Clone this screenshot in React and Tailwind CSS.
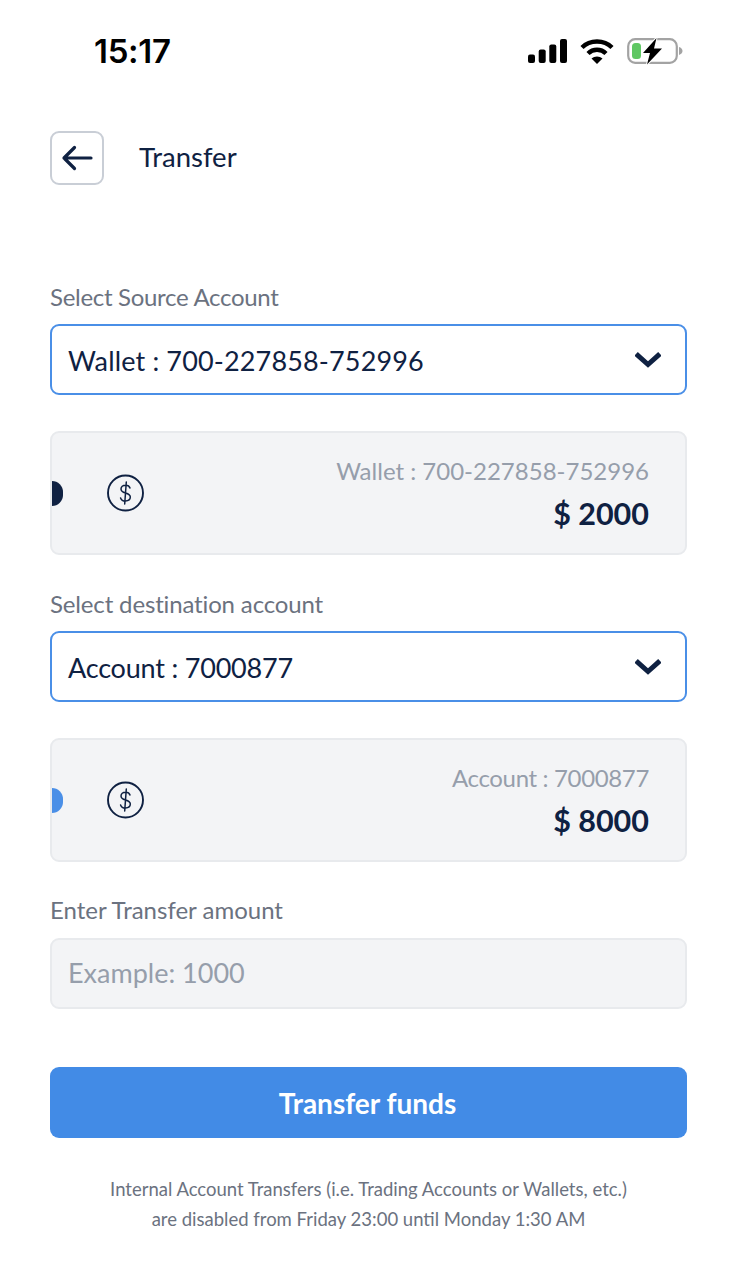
import React from "react";

function Chevron() {
  return (
    <svg width="26" height="18" viewBox="0 0 26 18" fill="none" className="shrink-0">
      <path d="M3 4.500 L13 13.500 L23 4.500" stroke="#0f2142" strokeWidth="5" strokeLinecap="square" strokeLinejoin="miter" />
    </svg>
  );
}

function Dollar() {
  return (
    <svg width="37" height="38" viewBox="0 0 37 38" fill="none" className="shrink-0">
      <circle cx="18.500" cy="19" r="17.500" stroke="#0f2142" strokeWidth="1.900" />
      <path d="M23 14c-.5-1.700-2.100-2.800-4.500-2.800-2.700 0-4.500 1.500-4.500 3.800 0 2.500 2 3.300 4.500 3.900 2.700.7 4.800 1.500 4.800 4.200 0 2.400-2.100 3.900-4.800 3.900-2.600 0-4.300-1.200-4.900-3.100M19.300 8l-1.600 22" stroke="#0f2142" strokeWidth="1.500" strokeLinecap="round" />
    </svg>
  );
}

function Select({ children, tracking }) {
  return (
    <div className="mt-[12px] h-[71px] rounded-[9px] border-2 border-[#4a8fe7] bg-white flex items-center justify-between pl-[16px] pr-[24px]">
      <span className={`pt-[3px] text-[27px] text-[#0f2142] ${tracking}`}>{children}</span>
      <Chevron />
    </div>
  );
}

function Card({ dot, name, amount, tracking }) {
  return (
    <div className="mt-[36px] h-[124px] rounded-[9px] border-2 border-[#e8eaed] bg-[#f3f4f6] flex items-center pr-[36px]">
      <div className={`w-[11px] h-[25px] rounded-r-full ${dot}`} />
      <div className="ml-[44px]"><Dollar /></div>
      <div className="ml-auto flex flex-col items-end">
        <span className={`text-[24px] leading-[30px] text-[#969eab] ${tracking}`}>{name}</span>
        <span className="mt-[9px] text-[30.500px] leading-[36px] font-bold text-[#0f2142]">{amount}</span>
      </div>
    </div>
  );
}

function Label({ children, className }) {
  return <div className={`text-[24px] leading-[30px] text-[#6b7280] ${className}`}>{children}</div>;
}

export default function App() {
  return (
    <div className="w-[749px] h-[1280px] bg-white overflow-hidden font-['Lato',sans-serif]">
      <div className="h-[100px] flex items-start justify-between pl-[94px] pr-[66px] pt-[31px]">
        <span className="font-['Inter',sans-serif] text-[33px] leading-[40px] font-semibold text-black tracking-[-0.3px]">15:17</span>
        <div className="flex items-center gap-[13px] h-[40px]">
          <svg width="39" height="24" viewBox="0 0 39 24" fill="#000">
            <rect x="0" y="15.500" width="7" height="8.500" rx="2" />
            <rect x="10.700" y="10.500" width="7" height="13.500" rx="2" />
            <rect x="21.300" y="5.500" width="7" height="18.500" rx="2" />
            <rect x="32" y="0" width="7" height="24" rx="2" />
          </svg>
          <svg width="34" height="25" viewBox="0 0 34 25" fill="none">
            <path d="M2 8.500 C10 .5 24 .5 32 8.500" stroke="#000" strokeWidth="4.400" />
            <path d="M8 14.500 C13 9.500 21 9.500 26 14.500" stroke="#000" strokeWidth="4.400" />
            <path d="M17 25 L11.500 19.500 C14.500 16.700 19.500 16.700 22.500 19.500 Z" fill="#000" />
          </svg>
          <svg width="56" height="28" viewBox="0 0 56 28" fill="none">
            <rect x="1.200" y="2.200" width="48.600" height="23.600" rx="7" stroke="#a3a3a3" strokeWidth="2.200" />
            <rect x="5" y="6" width="9" height="16" rx="3.500" fill="#5fc763" />
            <path d="M52 10v8c2-.6 3.500-2.200 3.500-4s-1.500-3.400-3.500-4z" fill="#a3a3a3" />
            <path d="M29.500 1 L16 16 H23 L20 27.500 L35 11.500 H27 Z" fill="#000" stroke="#fff" strokeWidth="2" paintOrder="stroke" />
          </svg>
        </div>
      </div>

      <div className="pl-[50px] pr-[62px]">
        <div className="mt-[31px] flex items-center">
          <button className="w-[54px] h-[54px] rounded-[9px] border-2 border-[#c9ced6] bg-white flex items-center justify-center">
            <svg width="32" height="28" viewBox="0 0 32 28" fill="none">
              <path d="M30 14 H3 M13.500 3.500 L3 14 L13.500 24.500" stroke="#0f2142" strokeWidth="3.200" strokeLinecap="round" strokeLinejoin="round" />
            </svg>
          </button>
          <span className="ml-[35px] pb-[2px] text-[27.500px] text-[#0f2142]">Transfer</span>
        </div>

        <Label className="mt-[97px] tracking-[-0.3px]">Select Source Account</Label>
        <Select tracking="tracking-[0.15px]">Wallet : 700-227858-752996</Select>
        <Card dot="bg-[#0f2142]" name="Wallet : 700-227858-752996" amount="$ 2000" />

        <Label className="mt-[34px] tracking-[-0.15px]">Select destination account</Label>
        <Select tracking="tracking-[-0.2px]">Account : 7000877</Select>
        <Card dot="bg-[#4a8fe7]" name="Account : 7000877" amount="$ 8000" tracking="tracking-[-0.35px]" />

        <Label className="mt-[33px] tracking-[0px]">Enter Transfer amount</Label>
        <div className="mt-[13px] h-[71px] rounded-[9px] border-2 border-[#e8eaed] bg-[#f3f4f6] flex items-center pl-[16px]">
          <span className="text-[27px] text-[#969eab]">Example: 1000</span>
        </div>

        <button className="mt-[58px] w-full h-[71px] rounded-[9px] bg-[#428be6] text-white text-[28px] font-bold flex items-center justify-center pr-[2px]">
          Transfer funds
        </button>

        <div className="mt-[36px] text-center text-[18.500px] leading-[30px] text-[#6b7280]">
          <div>Internal Account Transfers (i.e. Trading Accounts or Wallets, etc.)</div>
          <div>are disabled from Friday 23:00 until Monday 1:30 AM</div>
        </div>
      </div>
    </div>
  );
}
